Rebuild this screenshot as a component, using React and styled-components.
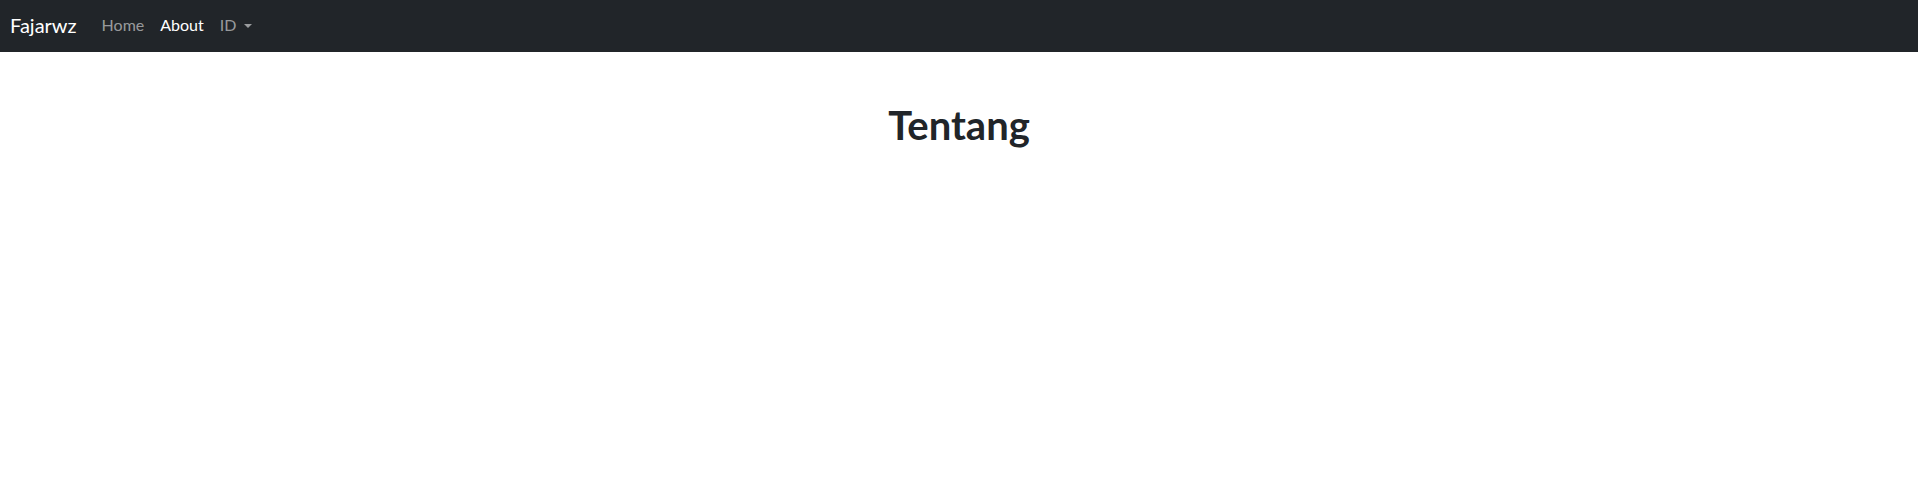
import React from "react";
import styled, { createGlobalStyle } from "styled-components";

const Global = createGlobalStyle`
  html, body { margin: 0; padding: 0; background: #fff; }
  body { font-family: "Lato", "Noto Sans", sans-serif; color: #212529; }
`;

const Navbar = styled.nav`
  display: flex;
  align-items: center;
  height: 52px;
  box-sizing: border-box;
  padding: 0 10px 3px;
  background: #212529;
`;

const Brand = styled.a`
  font-size: 20px;
  line-height: 30px;
  color: #fff;
  text-decoration: none;
  margin-right: 17px;
`;

const NavList = styled.div`
  display: flex;
  align-items: center;
`;

const NavLink = styled.a`
  display: flex;
  align-items: center;
  font-size: 16px;
  line-height: 24px;
  padding: 8px 8px;
  color: ${(p) => (p.$active ? "#fff" : "rgba(255,255,255,0.55)")};
  text-decoration: none;
`;

const Caret = styled.span`
  display: inline-block;
  margin-left: 8px;
  width: 0;
  height: 0;
  border-top: 4px solid rgba(255,255,255,0.55);
  border-left: 4px solid transparent;
  border-right: 4px solid transparent;
  margin-top: 2px;
`;

const Main = styled.main`
  display: flex;
  justify-content: center;
  padding-top: 49px;
`;

const Title = styled.h1`
  margin: 0;
  font-size: 40px;
  line-height: 48px;
  font-weight: 700;
  color: #212529;
`;

export default function App() {
  return (
    <>
      <Global />
      <Navbar>
        <Brand href="#">Fajarwz</Brand>
        <NavList>
          <NavLink href="#">Home</NavLink>
          <NavLink href="#" $active>About</NavLink>
          <NavLink href="#">
            ID
            <Caret />
          </NavLink>
        </NavList>
      </Navbar>
      <Main>
        <Title>Tentang</Title>
      </Main>
    </>
  );
}
